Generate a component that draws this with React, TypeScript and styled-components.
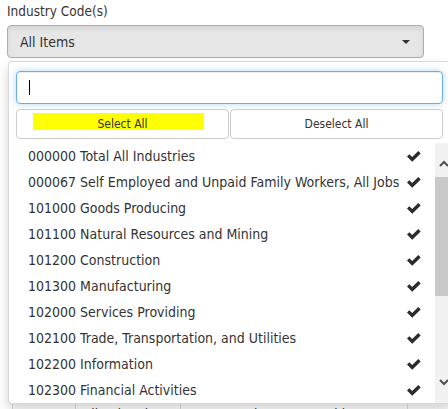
import React from "react";
import styled, { createGlobalStyle } from "styled-components";

const industries = [
  "000000 Total All Industries",
  "000067 Self Employed and Unpaid Family Workers, All Jobs",
  "101000 Goods Producing",
  "101100 Natural Resources and Mining",
  "101200 Construction",
  "101300 Manufacturing",
  "102000 Services Providing",
  "102100 Trade, Transportation, and Utilities",
  "102200 Information",
  "102300 Financial Activities",
];

const Check = () => (
  <svg width="14" height="11" viewBox="0 0 14 11">
    <path d="M0 5.6 L2.3 3.3 L5.2 6.1 L11.3 0 L13.7 2.4 L5.2 10.8 Z" fill="#2b2b2b" />
  </svg>
);

const Chevron = ({ up }: { up?: boolean }) => (
  <svg width="10" height="7" viewBox="0 0 10 7">
    <path
      d={up ? "M1 6 L5 2 L9 6" : "M1 1 L5 5 L9 1"}
      fill="none"
      stroke="#505050"
      strokeWidth="2"
    />
  </svg>
);

const App = () => {
  return (
    <>
      <GlobalStyle />
      <S.Page>
        <S.Label>Industry Code(s)</S.Label>
        <S.Field>
          <S.SelectButton>
            <span>All Items</span>
            <S.Caret />
          </S.SelectButton>

          {/* open multiselect menu */}
          <S.Menu>
            <S.Header>
              <S.Search>
                <S.TextCaret />
              </S.Search>
              <S.Actions>
                <S.ActionButton $marked>
                  <span>Select All</span>
                </S.ActionButton>
                <S.ActionButton>
                  <span>Deselect All</span>
                </S.ActionButton>
              </S.Actions>
            </S.Header>
            <S.ListArea>
              <S.Options>
                {industries.map((name) => (
                  <S.Option key={name}>
                    <S.OptionText>{name}</S.OptionText>
                    <Check />
                  </S.Option>
                ))}
              </S.Options>
              <S.Scrollbar>
                <S.ScrollUp>
                  <Chevron up />
                </S.ScrollUp>
                <S.Thumb />
                <S.Track />
                <S.ScrollDown>
                  <Chevron />
                </S.ScrollDown>
              </S.Scrollbar>
            </S.ListArea>
          </S.Menu>
        </S.Field>

        {/* page content hidden under the menu */}
        <S.Results>
          <S.Cell $w={63}>Own</S.Cell>
          <S.Cell $w={105}>All Industries</S.Cell>
          <S.Cell $w={227} $center>Private Ownership</S.Cell>
          <S.Cell $w={60}>Measure</S.Cell>
        </S.Results>
      </S.Page>
    </>
  );
};

export default App;

const GlobalStyle = createGlobalStyle`
  html, body {
    margin: 0;
    padding: 0;
    background: #ffffff;
    overflow: hidden;
  }
  body {
    font-family: "DejaVu Sans Condensed", "DejaVu Sans", sans-serif;
    font-stretch: condensed;
    color: #333333;
  }
`;

interface markProps {
  $marked?: boolean;
}

interface cellProps {
  $w: number;
  $center?: boolean;
}

const S = {
  Page: styled.div`
    width: 448px;
    height: 409px;
    padding: 2px 0 0 7px;
    box-sizing: border-box;
  `,
  Label: styled.div`
    font-size: 13.5px;
    line-height: 18px;
    margin-bottom: 5px;
    color: #3a3330;
  `,
  Field: styled.div`
    position: relative;
    width: 417px;
  `,
  SelectButton: styled.div`
    display: flex;
    align-items: center;
    justify-content: space-between;
    box-sizing: border-box;
    height: 33px;
    padding: 0 12px 0 12px;
    background: #e6e6e6;
    border: 1px solid #adadad;
    border-radius: 4px;
    font-size: 14px;
    color: #333;
    box-shadow: inset 0 3px 5px rgba(0, 0, 0, 0.08);
  `,
  Caret: styled.span`
    width: 0;
    height: 0;
    border-top: 4px solid #333;
    border-left: 4px solid transparent;
    border-right: 4px solid transparent;
    margin-right: 1px;
  `,
  Menu: styled.div`
    position: absolute;
    top: 36px;
    left: 1px;
    width: 445px;
    box-sizing: border-box;
    background: #fff;
    border: 1px solid rgba(0, 0, 0, 0.15);
    border-radius: 4px;
    box-shadow: 0 6px 12px rgba(0, 0, 0, 0.175);
    z-index: 10;
  `,
  Header: styled.div`
    padding: 9px 9px 0 7px;
  `,
  Search: styled.div`
    display: flex;
    align-items: center;
    box-sizing: border-box;
    height: 33px;
    padding-left: 12px;
    border: 1px solid #66afe9;
    border-radius: 4px;
    box-shadow: inset 0 1px 1px rgba(0, 0, 0, 0.075),
      0 0 6px rgba(102, 175, 233, 0.5);
  `,
  TextCaret: styled.span`
    width: 1px;
    height: 15px;
    background: #000;
  `,
  Actions: styled.div`
    display: grid;
    grid-template-columns: 1fr 1fr;
    gap: 1px;
    margin-top: 5px;
  `,
  ActionButton: styled.div<markProps>`
    position: relative;
    display: flex;
    align-items: center;
    justify-content: center;
    height: 30px;
    box-sizing: border-box;
    border: 1px solid #cccccc;
    border-radius: 4px;
    font-size: 12px;
    color: #333;

    span {
      position: relative;
    }

    ${({ $marked }) =>
      $marked &&
      `
      &::before {
        content: "";
        position: absolute;
        left: 16px;
        top: 3px;
        width: 171px;
        height: 17px;
        background: #ffff00;
      }
    `}
  `,
  ListArea: styled.div`
    display: flex;
    height: 260px;
    margin-top: 4px;
  `,
  Options: styled.ul`
    flex: 1;
    margin: 0;
    padding: 0;
    list-style: none;
  `,
  Option: styled.li`
    display: flex;
    align-items: center;
    justify-content: space-between;
    height: 26px;
    padding: 0 14px 0 19px;
  `,
  OptionText: styled.span`
    font-size: 14px;
    color: #333;
    white-space: nowrap;
  `,
  Scrollbar: styled.div`
    display: flex;
    flex-direction: column;
    width: 17px;
    background: #f1f1f1;
  `,
  ScrollUp: styled.div`
    display: flex;
    justify-content: center;
    height: 34px;
    padding-top: 17px;
    box-sizing: border-box;
  `,
  Thumb: styled.div`
    height: 119px;
    background: #c8c8c8;
  `,
  Track: styled.div`
    flex: 1;
  `,
  ScrollDown: styled.div`
    display: flex;
    justify-content: center;
    height: 36px;
    padding-top: 12px;
    box-sizing: border-box;
  `,
  Results: styled.div`
    display: flex;
    margin: 345px 0 0 5px;
    border-left: 1px solid #dddddd;
  `,
  Cell: styled.div<cellProps>`
    width: ${({ $w }) => $w}px;
    flex-shrink: 0;
    padding: 3px 0 0 7px;
    box-sizing: border-box;
    border-right: 1px solid #dddddd;
    font-size: 13.5px;
    color: #333;
    text-align: ${({ $center }) => ($center ? "center" : "left")};
    white-space: nowrap;
    overflow: hidden;
  `,
};
